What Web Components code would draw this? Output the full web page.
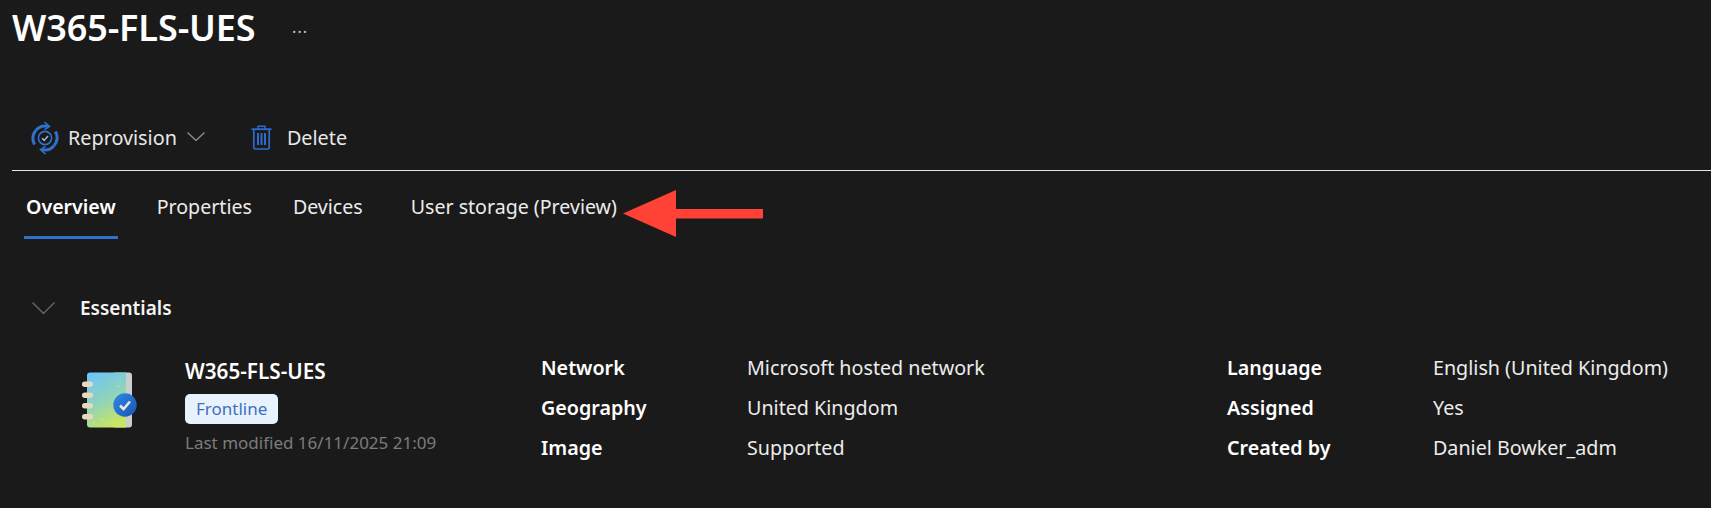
<!DOCTYPE html>
<html lang="en">
<head>
<meta charset="utf-8">
<title>W365-FLS-UES</title>
<style>
  html, body { margin: 0; height: 100%; background: #1b1a1a; overflow: hidden; }
  body { font-family: "Noto Sans", "Open Sans", "Liberation Sans", sans-serif; color: #f2f2f2; }
</style>
</head>
<body>
<page-title>W365-FLS-UES</page-title>
<command-bar>
  <command-button icon="reprovision" caret>Reprovision</command-button>
  <command-button icon="delete">Delete</command-button>
</command-bar>
<tab-bar>
  <tab-item selected>Overview</tab-item>
  <tab-item>Properties</tab-item>
  <tab-item>Devices</tab-item>
  <tab-item>User storage (Preview)</tab-item>
</tab-bar>
<essentials-panel>
  <policy-card name="W365-FLS-UES" badge="Frontline" modified="Last modified 16/11/2025 21:09"></policy-card>
  <prop-list>
    <prop-row label="Network">Microsoft hosted network</prop-row>
    <prop-row label="Geography">United Kingdom</prop-row>
    <prop-row label="Image">Supported</prop-row>
  </prop-list>
  <prop-list>
    <prop-row label="Language">English (United Kingdom)</prop-row>
    <prop-row label="Assigned">Yes</prop-row>
    <prop-row label="Created by">Daniel Bowker_adm</prop-row>
  </prop-list>
</essentials-panel>

<script>
  const ICONS = {
    reprovision: `
      <svg width="28" height="34" viewBox="0 0 28 34" fill="none" stroke="#2f72cc">
        <path d="M5.200 9A12 12 0 0 1 17 5.400" stroke-width="3"/>
        <path d="M22.800 25A12 12 0 0 1 11 28.600" stroke-width="3"/>
        <path d="M3.600 23.500A12 12 0 0 1 5.200 9" stroke-width="3"/>
        <path d="M24.400 10.500A12 12 0 0 1 22.800 25" stroke-width="3"/>
        <path d="M13.500 1L18.500 5.400L13.500 8.600" stroke-width="1.600"/>
        <path d="M14.500 33L9.500 28.600L14.500 25.400" stroke-width="1.600"/>
        <circle cx="14" cy="17" r="6.600" stroke-width="1.600"/>
        <path d="M11 17.200L13.200 19.400L17 15" stroke="#9fb4d0" stroke-width="1.600"/>
      </svg>`,
    delete: `
      <svg width="21" height="25" viewBox="0 0 21 25" fill="none" stroke="#2c6cd0">
        <path d="M0.5 4.200H20.500" stroke-width="1.800"/>
        <path d="M7 4V1.200H14V4" stroke-width="1.400"/>
        <path d="M2.800 4.200V22.600Q2.800 24 4.200 24H16.800Q18.200 24 18.200 22.600V4.200" stroke-width="1.700"/>
        <path d="M7 8V20M10.500 8V20M14 8V20" stroke-width="2"/>
      </svg>`
  };

  customElements.define(
    'page-title',
    class extends HTMLElement {
      constructor() {
        super();
        this.attachShadow({ mode: 'open' }).innerHTML = `
          <style>
            :host { display: flex; align-items: center; height: 54px; padding-bottom: 2px; padding-left: 12px; }
            h1 { margin: 0; font-size: 36px; font-weight: 600; color: #fff; letter-spacing: -0.1px; }
            span { margin-left: 36px; color: #c8c8c8; font-size: 22px; font-weight: 300; position: relative; top: -3px; }
          </style>
          <h1><slot></slot></h1>
          <span>…</span>
        `;
      }
    }
  );

  customElements.define(
    'command-bar',
    class extends HTMLElement {
      constructor() {
        super();
        this.attachShadow({ mode: 'open' }).innerHTML = `
          <style>
            :host {
              display: flex; align-items: center; gap: 46px;
              height: 43px; margin: 60px 0 0 12px; padding: 0 0 11px 19px;
              border-bottom: 1px solid #e6e6e6;
            }
          </style>
          <slot></slot>
        `;
      }
    }
  );

  customElements.define(
    'command-button',
    class extends HTMLElement {
      constructor() {
        super();
        const icon = ICONS[this.getAttribute('icon')];
        const caret = this.hasAttribute('caret')
          ? `<svg class="caret" width="18" height="9" viewBox="0 0 18 9" fill="none" stroke="#8f8f8f" stroke-width="1.3"><path d="M0.5 0.5L9 8.5L17.5 0.5"/></svg>`
          : '';
        this.attachShadow({ mode: 'open' }).innerHTML = `
          <style>
            :host { display: flex; align-items: center; gap: 9px; font-size: 19.800px; color: #e8e8e8; }
            .caret { margin-left: 1px; margin-top: -2px; }
            svg { display: block; }
            :host([icon="delete"]) { gap: 15px; }
          </style>
          ${icon}<slot></slot>${caret}
        `;
      }
    }
  );

  customElements.define(
    'tab-bar',
    class extends HTMLElement {
      constructor() {
        super();
        this.attachShadow({ mode: 'open' }).innerHTML = `
          <style>
            :host { display: flex; position: relative; gap: 37px; height: 68px; margin-left: 24px; }
            ::slotted(:last-of-type) { margin-left: 7px; }
            svg { position: absolute; left: 599px; top: 19px; }
          </style>
          <slot></slot>
          <svg width="140" height="48" viewBox="0 0 140 48">
            <path d="M0 23.5L53 0V19H140V28.500H53V47Z" fill="#ff4136"/>
          </svg>
        `;
      }
    }
  );

  customElements.define(
    'tab-item',
    class extends HTMLElement {
      constructor() {
        super();
        this.attachShadow({ mode: 'open' }).innerHTML = `
          <style>
            :host { display: block; box-sizing: border-box; height: 68px; padding: 22px 2px 0; font-size: 19.600px; color: #ececec; border-bottom: 3px solid transparent; white-space: nowrap; }
            :host([selected]) { font-weight: 600; color: #fff; border-bottom-color: #2f72cc; }
          </style>
          <slot></slot>
        `;
      }
    }
  );

  customElements.define(
    'essentials-panel',
    class extends HTMLElement {
      constructor() {
        super();
        this.attachShadow({ mode: 'open' }).innerHTML = `
          <style>
            :host { display: block; padding: 54px 0 0 32px; }
            header { display: flex; align-items: center; gap: 25px; height: 30px; font-size: 19px; font-weight: 600; color: #f5f5f5; }
            main { display: grid; grid-template-columns: 509px 686px 1fr; margin-top: 24px; }
          </style>
          <header>
            <svg width="23" height="12" viewBox="0 0 23 12" fill="none" stroke="#6a6a6a" stroke-width="1.3"><path d="M0.5 0.5L11.500 11.500L22.500 0.5"/></svg>
            <span>Essentials</span>
          </header>
          <main><slot></slot></main>
        `;
      }
    }
  );

  customElements.define(
    'policy-card',
    class extends HTMLElement {
      constructor() {
        super();
        const S = this;
        S.attachShadow({ mode: 'open' }).innerHTML = `
          <style>
            :host { display: flex; gap: 48px; padding: 10px 0 0 50px; }
            svg { display: block; margin-top: 15px; flex: none; }
            b { display: block; font-size: 20.700px; font-weight: 600; color: #fff; line-height: 28px; }
            span { display: inline-block; margin-top: 9px; padding: 0 11px; height: 30px; line-height: 29px; background: #e8f2fc; color: #3d70c2; border-radius: 5px; font-size: 17px; }
            small { display: block; margin-top: 7px; font-size: 17px; color: #7c7c7c; white-space: nowrap; }
          </style>
          <svg width="55" height="57" viewBox="0 0 55 57">
            <defs>
              <linearGradient id="page" x1="0.2" y1="0" x2="0.6" y2="1">
                <stop offset="0" stop-color="#6ec6f7"/>
                <stop offset="0.5" stop-color="#8ed3bb"/>
                <stop offset="1" stop-color="#c9e561"/>
              </linearGradient>
              <linearGradient id="seal" x1="0" y1="0" x2="1" y2="1">
                <stop offset="0" stop-color="#2f8ae6"/>
                <stop offset="1" stop-color="#1a54b4"/>
              </linearGradient>
            </defs>
            <rect x="30" y="0.5" width="20" height="55" rx="3" fill="#c9ced1"/>
            <path d="M8 0.5H44V55.500H8Q5 55.500 5 52.500V3.500Q5 0.5 8 0.5Z" fill="url(#page)"/>
            <g fill="#e8d8be">
              <rect x="0" y="9.500" width="11" height="5.500" rx="2.700"/>
              <rect x="0" y="20.500" width="11" height="5.500" rx="2.700"/>
              <rect x="0" y="31" width="11" height="5.500" rx="2.700"/>
              <rect x="0" y="42" width="11" height="5.500" rx="2.700"/>
            </g>
            <g fill="#f4f6c8" opacity="0.7">
              <circle cx="36" cy="14" r="0.7"/><circle cx="38" cy="9" r="0.6"/>
              <circle cx="20" cy="47" r="0.7"/><circle cx="30" cy="50" r="0.7"/><circle cx="12" cy="51" r="0.6"/>
            </g>
            <circle cx="43" cy="33" r="11.700" fill="url(#seal)"/>
            <path d="M38 33.500L41.500 37L48 29.500" fill="none" stroke="#ece6dc" stroke-width="2.600"/>
          </svg>
          <div>
            <b>${S.getAttribute('name')}</b>
            <span>${S.getAttribute('badge')}</span>
            <small>${S.getAttribute('modified')}</small>
          </div>
        `;
      }
    }
  );

  customElements.define(
    'prop-list',
    class extends HTMLElement {
      constructor() {
        super();
        this.attachShadow({ mode: 'open' }).innerHTML = `
          <style>
            :host { display: grid; grid-auto-rows: 40px; }
          </style>
          <slot></slot>
        `;
      }
    }
  );

  customElements.define(
    'prop-row',
    class extends HTMLElement {
      constructor() {
        super();
        const S = this;
        S.attachShadow({ mode: 'open' }).innerHTML = `
          <style>
            :host { display: grid; grid-template-columns: 206px 1fr; align-items: center; font-size: 19.700px; color: #ececec; white-space: nowrap; }
            b { font-weight: 600; color: #fff; }
          </style>
          <b>${S.getAttribute('label')}</b>
          <span><slot></slot></span>
        `;
      }
    }
  );
</script>
</body>
</html>
